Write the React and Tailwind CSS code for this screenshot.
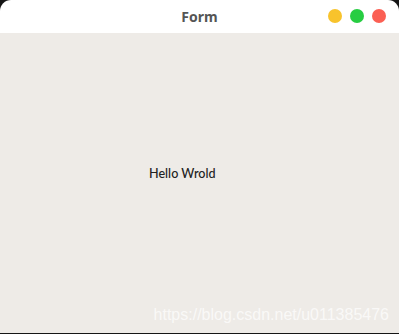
export default function App() {
  return (
    <div className="w-[399px] h-[334px] bg-[#151515] flex flex-col" style={{ fontFamily: '"Noto Sans", "DejaVu Sans", sans-serif' }}>
      <div className="flex-1 flex flex-col rounded-t-[11px] overflow-hidden">
        <div className="h-[33px] bg-white relative flex items-center justify-center">
          <span className="text-[14px] font-bold text-[#555555] leading-none">Form</span>
          <div className="absolute right-[13px] top-[9px] flex gap-[8px]">
            <span className="w-[14px] h-[14px] rounded-full bg-[#f8c32c]" />
            <span className="w-[14px] h-[14px] rounded-full bg-[#27cd42]" />
            <span className="w-[14px] h-[14px] rounded-full bg-[#fb5f53]" />
          </div>
        </div>
        <div className="flex-1 bg-[#eeebe7] flex flex-col">
          <div className="pl-[149px] pt-[133px] text-[12.6px] leading-[16px] font-medium text-[#222222]" style={{ fontFamily: 'Lato, "Noto Sans", sans-serif' }}>Hello Wrold</div>
          <div className="mt-auto pb-[9px] pr-[10px] text-right text-[16px] leading-[18px] text-white/70" style={{ fontFamily: '"Liberation Sans", Arial, sans-serif' }}>
            https://blog.csdn.net/u011385476
          </div>
        </div>
      </div>
      <div className="h-[1px]" />
    </div>
  );
}
